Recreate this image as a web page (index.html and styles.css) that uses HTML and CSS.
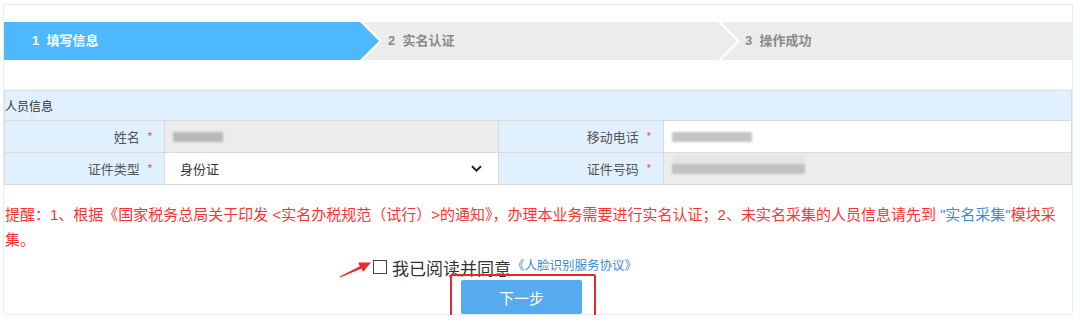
FILE: index.html
```html
<!DOCTYPE html>
<html lang="zh-CN">
<head>
  <meta charset="UTF-8" />
  <title>实名认证 - 填写信息</title>
  <link rel="stylesheet" href="styles.css">
</head>
<body>

<div class="steps-panel">
  <div class="steps">
    <div class="step step-first active">1&nbsp;&nbsp;填写信息</div>
    <div class="step step-mid">2&nbsp;&nbsp;实名认证</div>
    <div class="step step-last">3&nbsp;&nbsp;操作成功</div>
  </div>
</div>

<div class="form-panel">
  <table class="info">
    <colgroup>
      <col class="c-lbl1">
      <col class="c-val1">
      <col class="c-lbl2">
      <col>
    </colgroup>
    <tr>
      <th colspan="4" class="section">人员信息</th>
    </tr>
    <tr>
      <td class="lbl">姓名<i class="req">*</i></td>
      <td class="val"><div class="field disabled"><span class="mask mask-name"></span></div></td>
      <td class="lbl">移动电话<i class="req">*</i></td>
      <td class="val"><div class="field"><span class="mask mask-phone"></span></div></td>
    </tr>
    <tr>
      <td class="lbl">证件类型<i class="req">*</i></td>
      <td class="val">
        <div class="field select">
          <span>身份证</span>
          <svg class="chevron" width="11" height="7" viewBox="0 0 11 7"><path d="M1 1.2 L5.5 5.6 L10 1.2" fill="none" stroke="#222" stroke-width="2"/></svg>
        </div>
      </td>
      <td class="lbl">证件号码<i class="req">*</i></td>
      <td class="val"><div class="field disabled"><span class="mask mask-id"></span></div></td>
    </tr>
  </table>

  <p class="notice">提醒：1、根据《国家税务总局关于印发 &lt;实名办税规范（试行）&gt;的通知》，办理本业务需要进行实名认证；2、未实名采集的人员信息请先到 <a class="link">"实名采集"</a>模块采集。</p>

  <div class="agree">
    <span class="checkbox"></span>
    <span class="agree-text">我已阅读并同意</span>
    <a class="protocol">《人脸识别服务协议》</a>
  </div>

  <div class="actions">
    <button class="next">下一步</button>
  </div>
</div>

<!-- annotations -->
<svg class="arrow-mark" width="40" height="26" viewBox="0 0 40 26">
  <polygon points="3.8,21.6 23.8,11.2 22.2,7.6 35,7.5 27,17 25.6,13.6 4.2,22.4" fill="#f0282a"/>
</svg>
<div class="box-mark"></div>

</body>
</html>
```

FILE: styles.css
```css
body {
  margin: 0;
  background: #fff;
  font-family: "Liberation Sans", "Noto Sans CJK SC", sans-serif;
  color: #333;
  position: relative;
}
.steps-panel {
  margin: 4px 7px 0 3px;
  border: 1px solid #e6eef8;
  height: 84px;
}
.steps {
  display: flex;
  height: 38px;
  margin-top: 17px;
}
.step {
  height: 38px;
  line-height: 38px;
  font-size: 13px;
  font-weight: bold;
  color: #8a8a8a;
  background: #ececec;
  white-space: nowrap;
}
.step-first {
  width: 347px;
  padding-left: 28px;
  clip-path: polygon(0 0, calc(100% - 19px) 0, 100% 50%, calc(100% - 19px) 100%, 0 100%);
}
.step.active {
  background: #4db8fb;
  color: #fff;
}
.step-mid {
  width: 349px;
  padding-left: 25px;
  margin-left: -16px;
  clip-path: polygon(0 0, calc(100% - 19px) 0, 100% 50%, calc(100% - 19px) 100%, 0 100%, 19px 50%);
}
.step-last {
  flex: 1;
  padding-left: 24px;
  margin-left: -16px;
  clip-path: polygon(0 0, 100% 0, 100% 100%, 0 100%, 19px 50%);
}

.form-panel {
  margin: 0 7px 0 3px;
  border: 1px solid #e4eefa;
  border-top: none;
  border-radius: 0 0 3px 3px;
}
.info {
  width: 100%;
  border-collapse: collapse;
}
.c-lbl1 { width: 160px; }
.c-val1 { width: 334px; }
.c-lbl2 { width: 165px; }
.info th,
.info td {
  border: 1px solid #dadada;
  padding: 0;
}
.info tr:first-child th {
  border-top-color: #e6e6e6;
}
.section {
  height: 29px;
  background: #e1f0fe;
  text-align: left;
  font-size: 12px;
  font-weight: normal;
  color: #333;
}
.info td {
  height: 31px;
}
.lbl {
  background: #e1f0fe;
  text-align: right;
  padding-right: 12px !important;
  font-size: 13px;
  color: #555;
}
.req {
  font-style: normal;
  color: #f04040;
  font-size: 11px;
  margin-left: 8px;
  vertical-align: 2px;
}
.val {
  background: #e1f0fe;
  padding: 0 !important;
}
.field {
  height: 31px;
  box-sizing: border-box;
  background: #fff;
  display: flex;
  align-items: center;
}
.field.disabled {
  background: #ececec;
}
.mask {
  display: block;
  height: 10px;
  margin-left: 8px;
  background: #b8b8b8;
  filter: blur(1.2px);
}
.mask-name { width: 50px; }
.mask-phone { width: 80px; background: #c4c4c4; }
.mask-id {
  width: 133px;
  background: #c0c0c0;
  box-shadow: 0 -9px 3px -1px #e2e2e2;
}
.select {
  justify-content: space-between;
  padding: 0 16px 0 15px;
  font-size: 13px;
  color: #333;
}

.notice {
  margin: 17px 0 0 1px;
  font-size: 15px;
  line-height: 25px;
  color: #f33;
}
.link {
  color: #3c8ad6;
}

.agree {
  margin: 3px 0 0 369px;
  height: 24px;
  display: flex;
  align-items: center;
}
.checkbox {
  width: 12px;
  height: 12px;
  border: 1px solid #444;
  background: #fff;
  margin-right: 5px;
}
.agree-text {
  font-size: 17px;
  color: #333;
}
.protocol {
  font-size: 12.5px;
  color: #3c8ad6;
  margin-left: 1px;
  align-self: flex-start;
  margin-top: 0;
}

.actions {
  margin: 1px 0 0 457px;
  height: 34px;
}
.next {
  width: 121px;
  height: 34px;
  border: none;
  border-radius: 2px;
  background: #56abee;
  color: #fff;
  font-size: 15px;
  font-family: "Noto Sans CJK SC", sans-serif;
  cursor: pointer;
}

.arrow-mark {
  position: absolute;
  left: 336px;
  top: 255px;
}
.box-mark {
  position: absolute;
  left: 450px;
  top: 274px;
  width: 142px;
  height: 39px;
  border: 2px solid #e5262b;
  border-radius: 2px;
}
```
